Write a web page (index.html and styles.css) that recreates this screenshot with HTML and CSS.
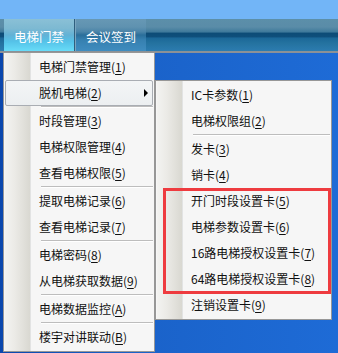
FILE: index.html
```html
<!DOCTYPE html>
<html lang="zh-CN">
<head>
<meta charset="utf-8">
<title>电梯门禁</title>
<link rel="stylesheet" href="styles.css">
</head>
<body>
<div class="screen">
  <div class="topband"></div>
  <div class="menubar">
    <div class="tab active">电梯门禁</div>
    <div class="tab-sep"></div>
    <div class="tab">会议签到</div>
  </div>
  <div class="barline"></div>
  <div class="desktop"></div>

  <div class="menu main-menu">
    <div class="item">电梯门禁管理(<u>1</u>)</div>
    <div class="item hot">脱机电梯(<u>2</u>)<span class="arrow"></span></div>
    <div class="sep"></div>
    <div class="item">时段管理(<u>3</u>)</div>
    <div class="item">电梯权限管理(<u>4</u>)</div>
    <div class="item">查看电梯权限(<u>5</u>)</div>
    <div class="sep"></div>
    <div class="item">提取电梯记录(<u>6</u>)</div>
    <div class="item">查看电梯记录(<u>7</u>)</div>
    <div class="sep"></div>
    <div class="item">电梯密码(<u>8</u>)</div>
    <div class="item">从电梯获取数据(<u>9</u>)</div>
    <div class="sep"></div>
    <div class="item">电梯数据监控(<u>A</u>)</div>
    <div class="sep"></div>
    <div class="item">楼宇对讲联动(<u>B</u>)</div>
  </div>

  <div class="menu sub-menu">
    <div class="item">IC卡参数(<u>1</u>)</div>
    <div class="item">电梯权限组(<u>2</u>)</div>
    <div class="sep"></div>
    <div class="item">发卡(<u>3</u>)</div>
    <div class="item">销卡(<u>4</u>)</div>
    <div class="mark-group">
      <div class="item">开门时段设置卡(<u>5</u>)</div>
      <div class="item">电梯参数设置卡(<u>6</u>)</div>
      <div class="item">16路电梯授权设置卡(<u>7</u>)</div>
      <div class="item">64路电梯授权设置卡(<u>8</u>)</div>
    </div>
    <div class="item">注销设置卡(<u>9</u>)</div>
  </div>
</div>
</body>
</html>
```

FILE: styles.css
```css
html, body {
  margin: 0;
  padding: 0;
}
body {
  width: 338px;
  height: 353px;
  overflow: hidden;
  font-family: "Noto Sans CJK SC", "Microsoft YaHei", sans-serif;
}
.screen {
  position: relative;
  width: 338px;
  height: 353px;
  background: #1a62c9;
  display: flex;
  flex-direction: column;
}
.topband {
  height: 19px;
  background: #72b5f7;
}
.menubar {
  height: 32px;
  display: flex;
  padding-left: 4px;
  background: linear-gradient(#5c8fa9 0, #5a8ca8 25%, #3f7a9b 40%, #0d4c77 45%, #0f4f7b 55%, #1b6898 60%, #24729f 75%, #2c7cb0 100%);
}
.tab {
  width: 70px;
  color: #fff;
  font-size: 12.5px;
  line-height: 36px;
  text-align: center;
  background: linear-gradient(#6798b4 0, #5f92b0 25%, #4a84a8 40%, #2a6e9a 50%, #3680b0 65%, #3f8cbf 100%);
}
.tab.active {
  background: linear-gradient(#8ac0d6 0, #7db9d2 30%, #62b2d6 50%, #55c2e8 70%, #68dcf8 100%);
}
.tab-sep {
  width: 2px;
  background: linear-gradient(to right, #2f5f7e 0 1px, #7aa6c0 1px 2px);
}
.barline {
  height: 2px;
  background: #8c9196;
}
.desktop {
  flex: 1;
  background: linear-gradient(to right, #0b47ad 0, #1a62c9 40%, #1e6bd6 100%);
}

/* popup menus (overlay the desktop) */
.menu {
  position: absolute;
  box-sizing: border-box;
  border: 1px solid #979797;
  padding: 1px 1px 1px 1px;
  background:
    linear-gradient(to right, #f3f3f1 0, #ebeae6 40%, #d9d8d1 100%) 1px 0 / 25px 100% no-repeat,
    linear-gradient(to right, #e2e3e3, #e2e3e3) 26px 0 / 1px 100% no-repeat,
    #f6f6f6;
  font-size: 12px;
  color: #111;
}
.main-menu {
  left: 3px;
  top: 52px;
  width: 152px;
}
.sub-menu {
  left: 155px;
  top: 80px;
  width: 177px;
  padding-top: 1px;
}
.item {
  position: relative;
  height: 26px;
  line-height: 26px;
  padding-left: 34px;
  white-space: nowrap;
}
.item u {
  text-decoration-thickness: 1px;
  text-underline-offset: 2px;
}
.item.hot {
  box-sizing: border-box;
  border: 1px solid #a9adb3;
  border-radius: 2px;
  line-height: 24px;
  padding-left: 33px;
  background: linear-gradient(#f3f5f6, #eceff1);
}
.arrow {
  position: absolute;
  right: 4px;
  top: 8px;
  width: 0;
  height: 0;
  border-top: 4px solid transparent;
  border-bottom: 4px solid transparent;
  border-left: 4px solid #000;
}
.sep {
  height: 2px;
  margin-left: 36px;
  background: linear-gradient(#bdbdbd 0 1px, #ffffff 1px 2px);
}
.mark-group {
  position: relative;
}
.mark-group::after {
  content: "";
  position: absolute;
  left: 6px;
  right: -1px;
  top: 0;
  bottom: -2px;
  border: 3px solid #ee3b3f;
  pointer-events: none;
}
```
